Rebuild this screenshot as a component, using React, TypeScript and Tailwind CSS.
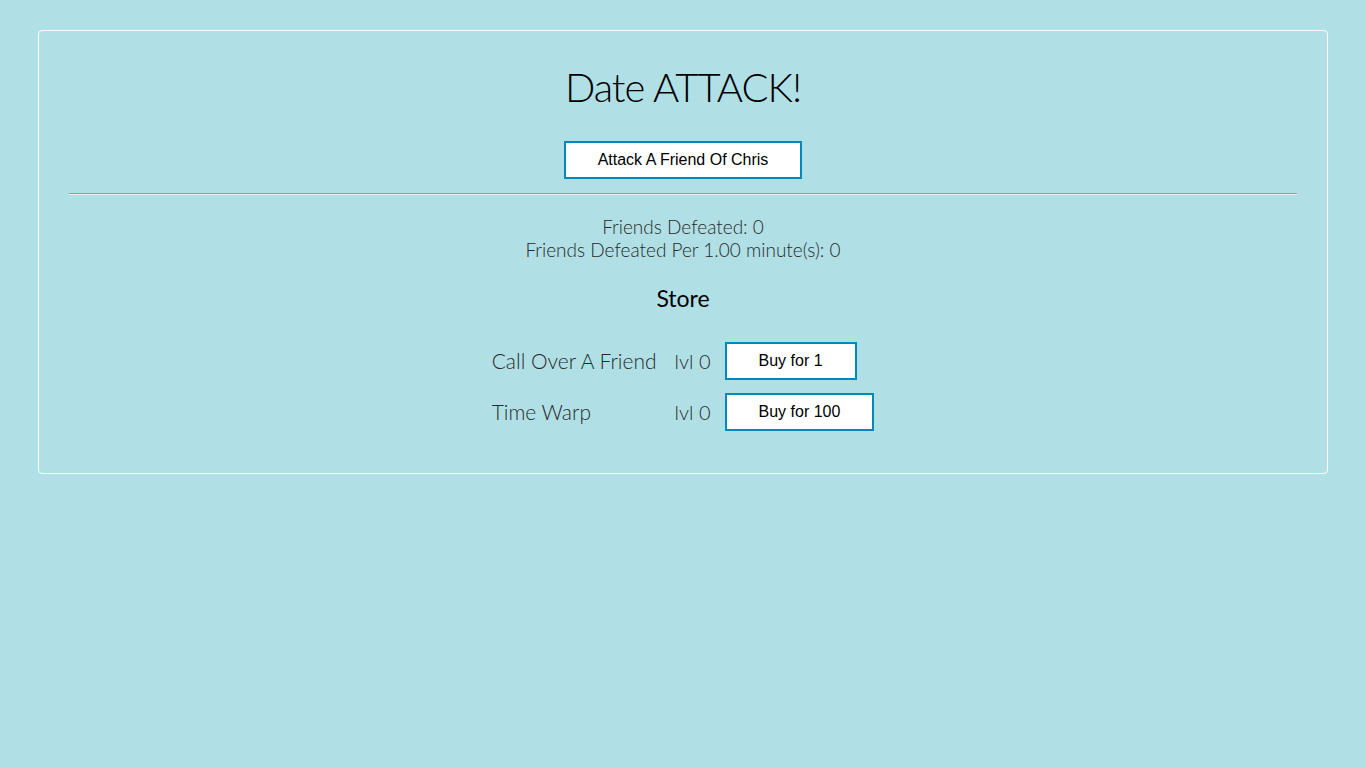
import React from 'react';

const thin = { fontFamily: 'Lato, "Open Sans", sans-serif' };

const items = [
  { name: 'Call Over A Friend', level: 0, cost: 1 },
  { name: 'Time Warp', level: 0, cost: 100 },
];

export default function App() {
  return (
    <div className="min-h-screen bg-[#b0e0e6] px-[38px] pt-[30px]">
      <div className="rounded-[4px] border border-white px-[30px] pt-[28px] pb-[42px]">
        <h1 className="text-center text-[40px] leading-[56px] font-light tracking-[-1px] text-black" style={thin}>
          Date ATTACK!
        </h1>

        <div className="mt-[26px] flex justify-center">
          <button className="h-[38px] w-[238px] border-2 border-[#0088bb] bg-white text-[16px] text-black font-['Liberation_Sans',Arial,sans-serif]">
            Attack A Friend Of Chris
          </button>
        </div>

        <hr className="mt-[14px] border-t border-t-[#999] border-b border-b-[#eee]" />

        <div className="mt-[20px] text-center text-[19px] leading-[23px] font-light text-[#2a2a2a]" style={thin}>
          <div>Friends Defeated: 0</div>
          <div>Friends Defeated Per 1.00 minute(s): 0</div>
        </div>

        <h2 className="mt-[23px] text-center text-[23px] leading-[28px] font-normal text-black" style={thin}>
          Store
        </h2>

        <div className="mt-[30px] flex justify-center">
          <table className="border-separate border-spacing-x-[7px] border-spacing-y-[13px] -my-[13px]">
            <tbody>
              {items.map((it) => (
                <tr key={it.name} className="h-[38px]">
                  <td className="pr-[11px] text-[21px] font-light text-[#2a2a2a]" style={thin}>
                    {it.name}
                  </td>
                  <td className="pr-[7px] text-[20px] font-light text-[#2a2a2a]" style={thin}>
                    lvl {it.level}
                  </td>
                  <td>
                    <button className="h-[38px] border-2 border-[#0088bb] bg-white px-[32px] text-[16px] text-black font-['Liberation_Sans',Arial,sans-serif]">
                      Buy for {it.cost}
                    </button>
                  </td>
                </tr>
              ))}
            </tbody>
          </table>
        </div>
      </div>
    </div>
  );
}
